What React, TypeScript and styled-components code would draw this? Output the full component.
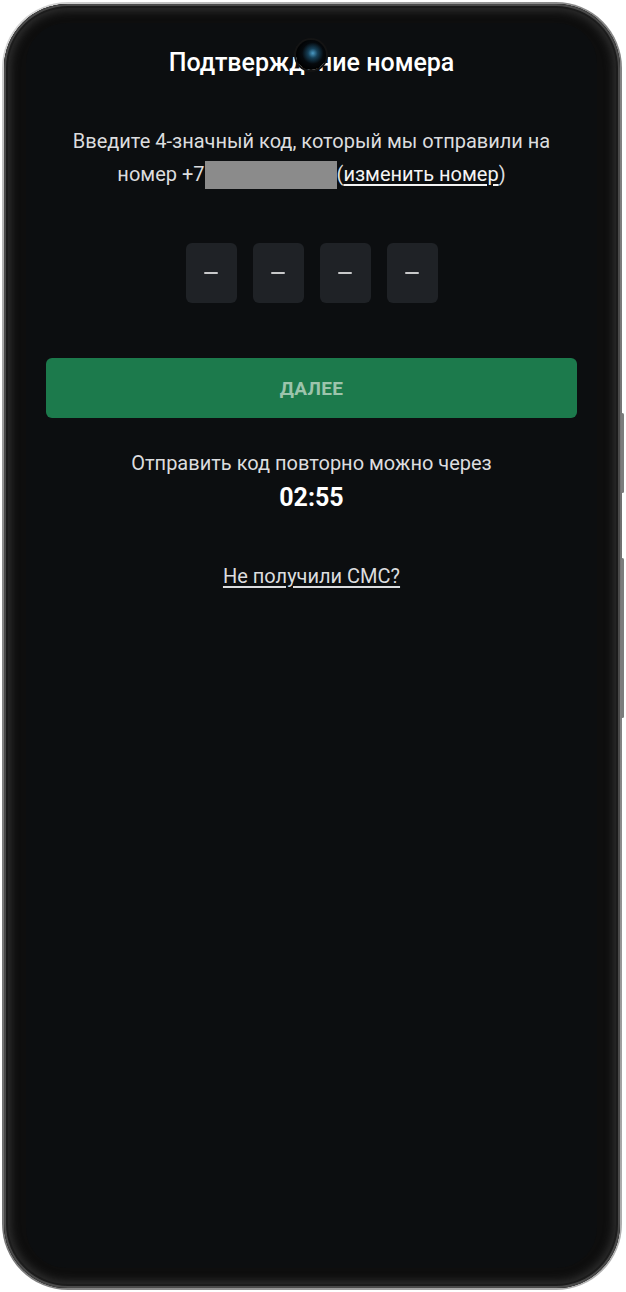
import React from 'react'
import styled, {createGlobalStyle} from 'styled-components'

const GlobalStyle = createGlobalStyle`
  html, body {
    margin: 0;
    padding: 0;
    background: #ffffff;
  }
  body {
    font-family: Roboto, 'Noto Sans', 'DejaVu Sans', sans-serif;
  }
`

const Page = styled.div`
  width: 626px;
  height: 1292px;
  padding: 2px;
  box-sizing: border-box;
`

const Phone = styled.div`
  position: relative;
  width: 620px;
  height: 1288px;
  box-sizing: border-box;
  padding: 2px;
  border-radius: 66px;
  background: linear-gradient(135deg, #d9d9d9 0%, #8a8a8a 30%, #6f6f6f 60%, #b5b5b5 100%);
`

const Rim = styled.div`
  width: 100%;
  height: 100%;
  box-sizing: border-box;
  padding: 19px 23px 20px 22px;
  border-radius: 64px;
  background: #0e0e0e;
  box-shadow: inset 0 0 0 2px #4a4a4a, inset 0 0 0 4px #1c1c1c, inset 0 0 9px 7px #2e2e2e;
`

const SideKey = styled.div<{$top: number; $height: number}>`
  position: absolute;
  right: -2px;
  top: ${p => p.$top}px;
  width: 3px;
  height: ${p => p.$height}px;
  border-radius: 2px;
  background: #7c7c7c;
`

const Screen = styled.div`
  position: relative;
  height: 100%;
  border-radius: 40px;
  background: #0c0e10;
  display: flex;
  flex-direction: column;
  align-items: center;
  padding: 25px 20px 0;
  box-sizing: border-box;
  overflow: hidden;
`

const Camera = styled.div`
  position: absolute;
  top: 17px;
  left: 50%;
  width: 30px;
  height: 30px;
  margin-left: -16px;
  border-radius: 50%;
  background: radial-gradient(circle at 56% 44%, #4a9ac4 0%, #164058 20%, #05090d 45%, #000 70%);
  box-shadow: 0 0 0 2px #141414;
`

const Title = styled.h1`
  margin: 0;
  font-size: 25px;
  line-height: 30px;
  font-weight: 500;
  color: #ffffff;
  text-align: center;
`

const Lead = styled.p`
  margin: 47px 0 0;
  font-size: 20px;
  line-height: 33px;
  color: #dcdddf;
  text-align: center;
`

const Masked = styled.span`
  display: inline-block;
  width: 132px;
  height: 28px;
  vertical-align: -8px;
  background: #8b8b8b;
  filter: blur(0.6px);
`

const Link = styled.a`
  color: #f4f4f4;
  text-decoration: underline;
  text-underline-offset: 3px;
`

const CodeRow = styled.div`
  display: flex;
  gap: 16px;
  margin-top: 52px;
`

const CodeCell = styled.div`
  width: 51px;
  height: 60px;
  border-radius: 6px;
  background: #1f2226;
  display: flex;
  align-items: center;
  justify-content: center;
`

const Dash = styled.span`
  width: 14px;
  height: 2px;
  border-radius: 1px;
  background: #c8c9ca;
`

const NextButton = styled.button`
  margin-top: 55px;
  width: 531px;
  height: 60px;
  border: 0;
  border-radius: 6px;
  background: #1c7a4c;
  color: #9cc4ac;
  font-family: inherit;
  font-size: 19px;
  font-weight: 700;
  letter-spacing: 0.3px;
`

const ResendText = styled.div`
  margin-top: 32px;
  font-size: 20px;
  line-height: 26px;
  color: #dcdddf;
`

const Timer = styled.div`
  margin-top: 7px;
  font-size: 25px;
  line-height: 30px;
  font-weight: 700;
  color: #ffffff;
`

const Help = styled.a`
  margin-top: 50px;
  font-size: 20px;
  line-height: 26px;
  color: #dcdddf;
  text-decoration: underline;
  text-underline-offset: 3px;
`

export default function App() {
  return (
    <Page>
      <GlobalStyle />
      <Phone>
        <SideKey $top={411} $height={80} />
        <SideKey $top={556} $height={160} />
        <Rim>
          <Screen>
            <Camera />
            <Title>Подтверждение номера</Title>
            <Lead>
              Введите 4-значный код, который мы отправили на
              <br />
              номер +7<Masked />(<Link>изменить номер</Link>)
            </Lead>
            <CodeRow>
              {[0, 1, 2, 3].map(i => (
                <CodeCell key={i}>
                  <Dash />
                </CodeCell>
              ))}
            </CodeRow>
            <NextButton>ДАЛЕЕ</NextButton>
            <ResendText>Отправить код повторно можно через</ResendText>
            <Timer>02:55</Timer>
            <Help>Не получили СМС?</Help>
          </Screen>
        </Rim>
      </Phone>
    </Page>
  )
}
